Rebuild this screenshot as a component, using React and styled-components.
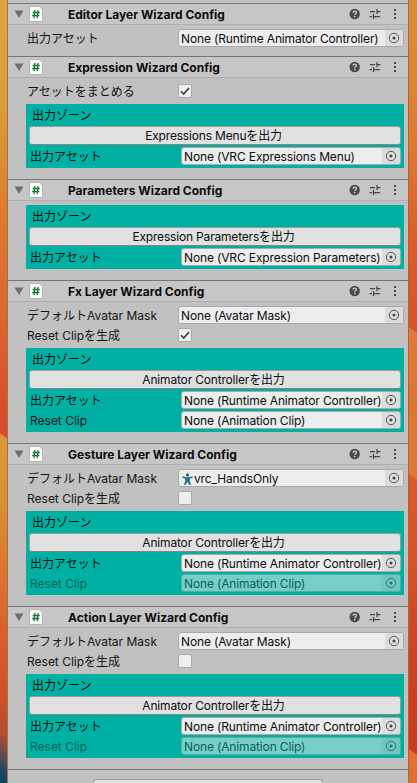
import React from "react";
import styled, { createGlobalStyle, css } from "styled-components";

const Global = createGlobalStyle`
  * { box-sizing: border-box; }
  body {
    margin: 0;
    overflow: hidden;
    font-family: Inter, "Noto Sans CJK JP", sans-serif;
    font-size: 12px;
    color: #0c0c0c;
  }
`;

const Desktop = styled.div`
  height: 783px;
  display: grid;
  grid-template-columns: 8px 400px 9px;
  overflow: hidden;
`;

const wallpaper = css`
  overflow: hidden;
  background: var(--paper);
  &::before {
    content: "";
    display: block;
    height: 100%;
    background: var(--paper);
    transform: skewY(33deg);
  }
`;

const LeftEdge = styled.div`
  --paper: linear-gradient(#dfa63c 0, #dc9c38 110px, #dd7f31 200px, #dc6a2c 300px, #d8512a 400px, #d64c2a 435px, #dc9a38 437px, #dc9036 500px, #dd7a30 560px, #d85d2a 640px, #cf5028 700px, #b04e30 735px, #5c4a50 757px, #1d4763 772px, #0d4163 783px);
  ${wallpaper}
  border-right: 1px solid #a8703f;
`;

const RightEdge = styled.div`
  --paper: linear-gradient(#d98d38 0, #db8434 100px, #dc7230 170px, #da5f2b 240px, #d6532a 329px, #de7b38 331px, #dd7532 400px, #dd7a33 476px, #d95c2a 478px, #d5522a 560px, #cd4425 650px, #c83b22 751px, #df7432 753px, #dc6e30 783px);
  ${wallpaper}
  border-left: 1px solid #a8643a;
`;

const Panel = styled.main`
  background: #c1c1c1;
  display: flex;
  flex-direction: column;
  min-width: 0;
`;

const PreviousEnd = styled.div`
  height: 3px;
  flex: none;
`;

const SectionBox = styled.section`
  flex: none;
  border-top: 1px solid #767676;
  padding-bottom: ${(p) => (p.$boxed ? 11 : 9)}px;
`;

const Header = styled.header`
  height: 21px;
  display: flex;
  align-items: center;
  background: #c6c6c6;
  border-bottom: 1px solid #afafaf;
  padding: 0 8px 0 6px;
`;

const Title = styled.h2`
  flex: 1;
  margin: 0 0 0 25px;
  padding-top: 2px;
  font-size: 12px;
  font-weight: 700;
  line-height: 20px;
  white-space: nowrap;
`;

const HeaderIcons = styled.div`
  display: flex;
  align-items: center;
  gap: 9px;
  margin-top: -1px;
`;

const Body = styled.div`
  padding: 4px 4px 0 18px;
  display: flex;
  flex-direction: column;
`;

const Row = styled.div`
  height: 18px;
  display: grid;
  grid-template-columns: 151px 1fr;
  align-items: center;
  padding-left: 1px;
  margin-bottom: ${(p) => (p.$last ? 0 : 2)}px;
  opacity: ${(p) => (p.$disabled ? 0.5 : 1)};
`;

const Label = styled.span`
  height: 18px;
  line-height: 19px;
  white-space: nowrap;
  color: #141414;
`;

const Field = styled.div`
  height: 18px;
  display: flex;
  align-items: center;
  border: 1px solid #a9a9a9;
  border-radius: 3px;
  background: #ededed;
  overflow: hidden;
  white-space: nowrap;
`;

const FieldText = styled.span`
  flex: 1;
  min-width: 0;
  display: flex;
  align-items: center;
  padding: 1px 0 0 2px;
  line-height: 17px;
  letter-spacing: -0.14px;
`;

const Picker = styled.span`
  flex: none;
  width: 18px;
  height: 16px;
  display: flex;
  align-items: center;
  justify-content: center;
  background: #dcdcdc;
`;

const Check = styled.span`
  width: 14px;
  height: 14px;
  display: flex;
  align-items: center;
  justify-content: center;
  border: 1px solid #a9a9a9;
  border-radius: 2px;
  background: #efefef;
`;

const Zone = styled.div`
  margin-top: ${(p) => (p.$spaced ? 2 : 0)}px;
  background: #00b0a2;
  padding: 0 3px 3px;
`;

const ZoneTitle = styled.div`
  height: 22px;
  line-height: 24px;
  padding-left: 3px;
`;

const Button = styled.button`
  display: block;
  width: 100%;
  height: 19px;
  margin: 0 0 2px;
  padding: 0 3px 0 0;
  border: 1px solid #9c9c9c;
  border-bottom-color: #858585;
  border-radius: 3px;
  background: #e1e1e1;
  color: #0c0c0c;
  font: inherit;
  letter-spacing: -0.18px;
  line-height: 17px;
`;

const Footer = styled.footer`
  flex: 1;
  border-top: 1px solid #767676;
  padding: 9px 85px 0;
`;

const FoldIcon = () => (
  <svg width="10" height="10" viewBox="0 0 10 10"><path d="M0.500 1.500h9L5 9z" fill="#6e6e6e" /></svg>
);

const ScriptSvg = styled.svg`
  margin-left: 5px;
`;
const ScriptIcon = () => (
  <ScriptSvg width="14" height="16" viewBox="0 0 14 16">
    <path d="M2 .5h8.500l3 3V14a1.500 1.500 0 0 1-1.500 1.500H2A1.500 1.500 0 0 1 .5 14V2A1.500 1.500 0 0 1 2 .5z" fill="#fafafa" stroke="#aaa" strokeWidth=".8" />
    <path d="M5.900 4 4.900 12.200M9.100 4 8.100 12.200M3.700 6.500h7M3.200 9.500h7" stroke="#157538" strokeWidth="1.300" fill="none" />
  </ScriptSvg>
);

const HelpIcon = () => (
  <svg width="12" height="12" viewBox="0 0 12 12">
    <circle cx="6.700" cy="6" r="5.200" fill="#4a4a4a" />
    <path d="M5 4.700C5 2.600 8.400 2.600 8.400 4.600C8.400 5.800 6.700 5.800 6.700 7.200" stroke="#d0d0d0" strokeWidth="1.300" fill="none" />
    <rect x="6" y="8" width="1.400" height="1.300" fill="#d0d0d0" />
  </svg>
);

const PresetIcon = () => (
  <svg width="12" height="12" viewBox="0 0 12 12">
    <path d="M1 3.500h5M8 3.500h3.500M8 1v5M0.500 8.500h2.500M4.500 8.500h6.500M4.500 6v5" stroke="#484848" strokeWidth="1.250" fill="none" />
  </svg>
);

const MenuIcon = () => (
  <svg width="10" height="12" viewBox="0 0 10 12" fill="#4a4a4a">
    <rect x="4" y="1" width="2" height="2" /><rect x="4" y="5" width="2" height="2" /><rect x="4" y="9" width="2" height="2" />
  </svg>
);

const TargetIcon = () => (
  <svg width="12" height="12" viewBox="0 0 12 12">
    <circle cx="6" cy="6" r="4.700" fill="none" stroke="#555" strokeWidth="1" />
    <circle cx="6" cy="6" r="1.500" fill="#444" />
  </svg>
);

const CheckIcon = () => (
  <svg width="12" height="12" viewBox="0 0 12 12">
    <path d="M2 6.300 4.700 9 10 3" fill="none" stroke="#3c3c3c" strokeWidth="1.600" />
  </svg>
);

const AvatarIcon = () => (
  <svg width="13" height="14" viewBox="0 0 13 14">
    <circle cx="6.500" cy="3" r="1.700" fill="#4a5f66" />
    <path d="M1.500 4.200 5 5.200h3l3.500-1 .4 1.300L8.700 7V9l1.400 3.500-1.600.4L6.500 9.700l-2 3.200-1.600-.4L4.300 9V7L1.100 5.500z" fill="#1b7486" />
  </svg>
);

const AssetRow = ({ label, value, icon, ...rest }) => (
  <Row {...rest}>
    <Label>{label}</Label>
    <Field>
      <FieldText>{icon}{value}</FieldText>
      <Picker><TargetIcon /></Picker>
    </Field>
  </Row>
);

const CheckRow = ({ label, checked }) => (
  <Row>
    <Label>{label}</Label>
    <Check>{checked && <CheckIcon />}</Check>
  </Row>
);

const OutputZone = ({ button, assets, spaced }) => (
  <Zone $spaced={spaced}>
    <ZoneTitle>出力ゾーン</ZoneTitle>
    <Button>{button}</Button>
    {assets.map((a, i) => (
      <AssetRow key={a.label} label={a.label} value={a.value} $disabled={a.disabled} $last={i === assets.length - 1} />
    ))}
  </Zone>
);

const Section = ({ title, boxed = true, children }) => (
  <SectionBox $boxed={boxed}>
    <Header>
      <FoldIcon />
      <ScriptIcon />
      <Title>{title}</Title>
      <HeaderIcons><HelpIcon /><PresetIcon /><MenuIcon /></HeaderIcons>
    </Header>
    <Body>{children}</Body>
  </SectionBox>
);

const CONTROLLER = "None (Runtime Animator Controller)";

const LayerSection = ({ title, mask, icon, resetClip }) => (
  <Section title={title}>
    <AssetRow label="デフォルトAvatar Mask" value={mask} icon={icon} />
    <CheckRow label="Reset Clipを生成" checked={resetClip} />
    <OutputZone
      spaced
      button="Animator Controllerを出力"
      assets={[
        { label: "出力アセット", value: CONTROLLER },
        { label: "Reset Clip", value: "None (Animation Clip)", disabled: !resetClip },
      ]}
    />
  </Section>
);

export default function App() {
  return (
    <Desktop>
      <Global />
      <LeftEdge />
      <Panel>
        <PreviousEnd />
        <Section title="Editor Layer Wizard Config" boxed={false}>
          <AssetRow label="出力アセット" value={CONTROLLER} $last />
        </Section>
        <Section title="Expression Wizard Config">
          <CheckRow label="アセットをまとめる" checked />
          <OutputZone spaced button="Expressions Menuを出力" assets={[{ label: "出力アセット", value: "None (VRC Expressions Menu)" }]} />
        </Section>
        <Section title="Parameters Wizard Config">
          <OutputZone button="Expression Parametersを出力" assets={[{ label: "出力アセット", value: "None (VRC Expression Parameters)" }]} />
        </Section>
        <LayerSection title="Fx Layer Wizard Config" mask="None (Avatar Mask)" resetClip />
        <LayerSection title="Gesture Layer Wizard Config" mask="vrc_HandsOnly" icon={<AvatarIcon />} />
        <LayerSection title="Action Layer Wizard Config" mask="None (Avatar Mask)" />
        <Footer><Button /></Footer>
      </Panel>
      <RightEdge />
    </Desktop>
  );
}
